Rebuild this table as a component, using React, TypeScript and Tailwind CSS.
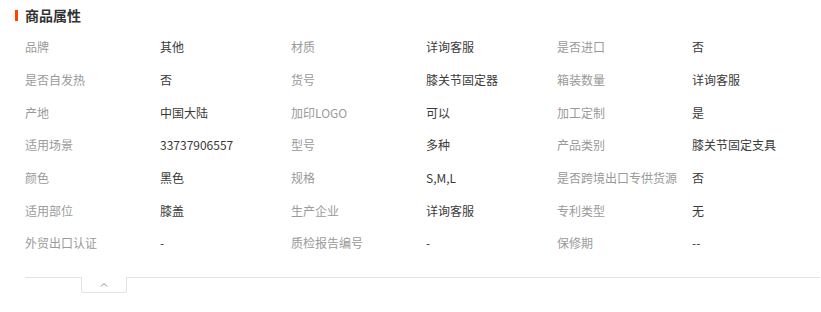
import React from 'react';

type Attr = { label: string; value: string };

const attrs: Attr[] = [
  { label: '品牌', value: '其他' },
  { label: '材质', value: '详询客服' },
  { label: '是否进口', value: '否' },
  { label: '是否自发热', value: '否' },
  { label: '货号', value: '膝关节固定器' },
  { label: '箱装数量', value: '详询客服' },
  { label: '产地', value: '中国大陆' },
  { label: '加印LOGO', value: '可以' },
  { label: '加工定制', value: '是' },
  { label: '适用场景', value: '33737906557' },
  { label: '型号', value: '多种' },
  { label: '产品类别', value: '膝关节固定支具' },
  { label: '颜色', value: '黑色' },
  { label: '规格', value: 'S,M,L' },
  { label: '是否跨境出口专供货源', value: '否' },
  { label: '适用部位', value: '膝盖' },
  { label: '生产企业', value: '详询客服' },
  { label: '专利类型', value: '无' },
  { label: '外贸出口认证', value: '-' },
  { label: '质检报告编号', value: '-' },
  { label: '保修期', value: '--' },
];

export default function App() {
  return (
    <div
      className="w-[821px] h-[312px] bg-white overflow-hidden"
      style={{ fontFamily: '"Noto Sans CJK SC", "Microsoft YaHei", sans-serif' }}
    >
      {/* title */}
      <div className="h-[31px] flex items-center pl-[15px]">
        <span className="w-[3px] h-[11px] bg-[#ff4400] mr-[7px]" />
        <span className="text-[14px] font-bold text-[#333]">商品属性</span>
      </div>

      {/* attribute grid */}
      <div className="pl-[25px] grid grid-cols-[266px_266px_266px]">
        {attrs.map((a) => (
          <div key={a.label} className="flex items-center h-[32.67px] text-[12px]">
            <span className="w-[135px] shrink-0 text-[#9a9a9a] whitespace-nowrap">{a.label}</span>
            <span className="text-[#3a3a3a] whitespace-nowrap">{a.value}</span>
          </div>
        ))}
      </div>

      {/* collapse bar */}
      <div className="relative ml-[25px] mr-[1px] mt-[17px] border-t border-[#e3e3e3]">
        <button className="absolute left-[56px] top-[-1px] w-[46px] h-[16px] bg-white border border-t-0 border-[#e3e3e3] rounded-b-[3px] flex items-center justify-center">
          <svg width="8" height="5" viewBox="0 0 8 5" fill="none">
            <path d="M1 4.5L4 1.5L7 4.5" stroke="#888" strokeWidth="1" />
          </svg>
        </button>
      </div>
    </div>
  );
}
